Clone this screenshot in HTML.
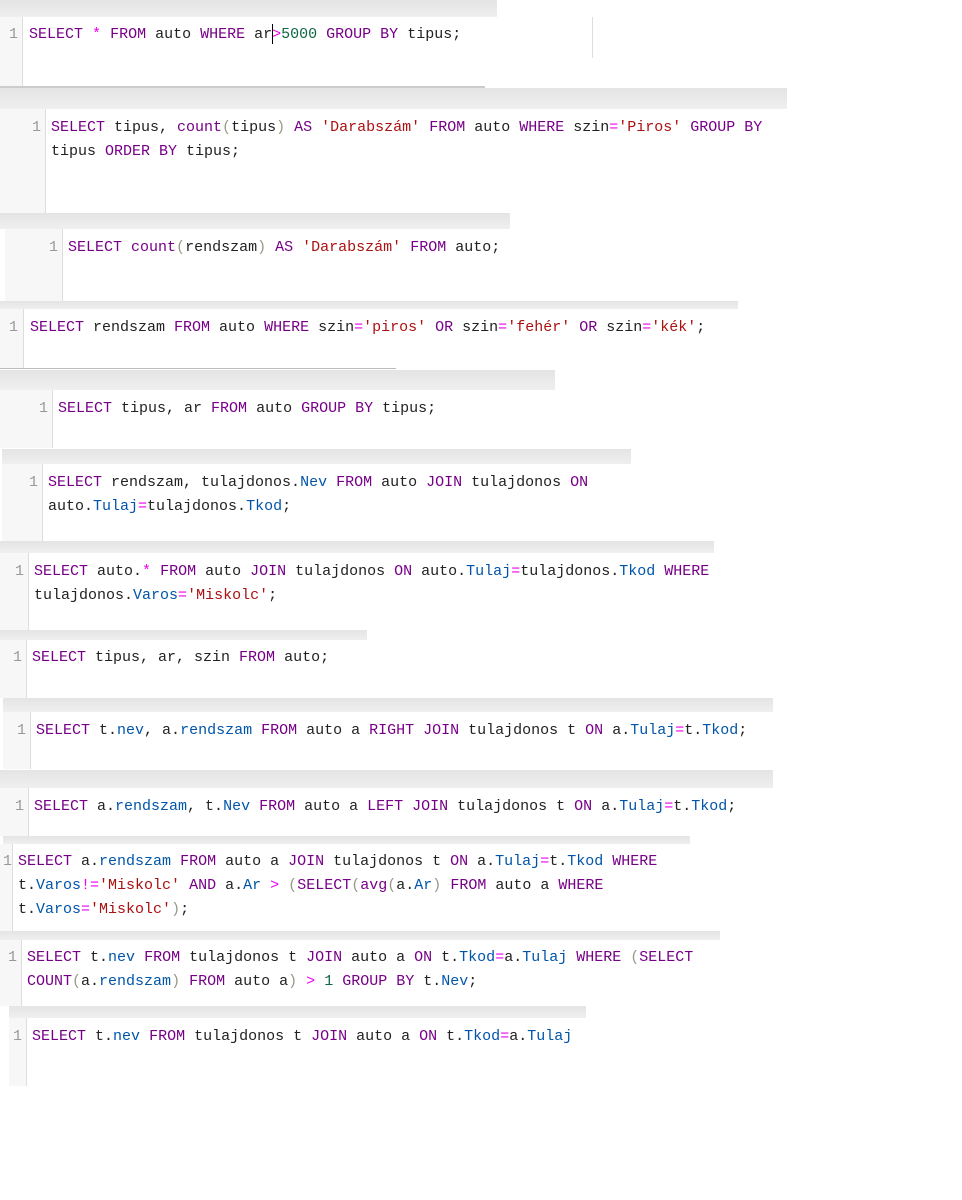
<!DOCTYPE html>
<html><head><meta charset="utf-8"><style>
body{margin:0;width:962px;height:1200px;background:#fff;position:relative;overflow:hidden;font-family:"Liberation Mono",monospace;font-size:15px;color:#222}
.b{position:absolute;background:linear-gradient(#e4e4e4,#efefef)}
.g{position:absolute;background:#f7f7f7;border-right:1px solid #ddd}
.t{position:absolute;line-height:24px;white-space:pre;margin-top:1px}
.n{position:absolute;line-height:24px;color:#999;margin-top:1px}
.k{color:#708}.s{color:#a11}.u{color:#164}.v{color:#05a}.o{color:#e0e}.p{color:#998}
</style></head><body>
<!-- 1 -->
<div class="b" style="left:0;top:0;width:497px;height:17px"></div>
<div class="g" style="left:0;top:17px;width:22px;height:70px"></div>
<div style="position:absolute;left:0;top:86px;width:485px;height:2px;background:#ccc"></div>
<div style="position:absolute;left:592px;top:17px;width:1px;height:41px;background:#ddd"></div>
<div class="n" style="left:9px;top:22px">1</div>
<div class="t" style="left:29px;top:22px"><span class="k">SELECT</span> <span class="o">*</span> <span class="k">FROM</span> auto <span class="k">WHERE</span> ar<span class="o">&gt;</span><span class="u">5000</span> <span class="k">GROUP BY</span> tipus;</div>
<div style="position:absolute;left:272px;top:24px;width:1px;height:20px;background:#000"></div>
<!-- 2 -->
<div class="b" style="left:0;top:88px;width:787px;height:21px"></div>
<div class="g" style="left:0;top:109px;width:45px;height:104px"></div>
<div class="n" style="left:32px;top:115px">1</div>
<div class="t" style="left:51px;top:115px"><span class="k">SELECT</span> tipus, <span class="k">count</span><span class="p">(</span>tipus<span class="p">)</span> <span class="k">AS</span> <span class="s">'Darabszám'</span> <span class="k">FROM</span> auto <span class="k">WHERE</span> szin<span class="o">=</span><span class="s">'Piros'</span> <span class="k">GROUP BY</span>
tipus <span class="k">ORDER BY</span> tipus;</div>
<!-- 3 -->
<div class="b" style="left:0;top:213px;width:510px;height:16px"></div>
<div class="g" style="left:5px;top:229px;width:57px;height:72px"></div>
<div class="n" style="left:49px;top:235px">1</div>
<div class="t" style="left:68px;top:235px"><span class="k">SELECT</span> <span class="k">count</span><span class="p">(</span>rendszam<span class="p">)</span> <span class="k">AS</span> <span class="s">'Darabszám'</span> <span class="k">FROM</span> auto;</div>
<!-- 4 -->
<div class="b" style="left:0;top:301px;width:738px;height:8px"></div>
<div class="g" style="left:0;top:309px;width:23px;height:59px"></div>
<div style="position:absolute;left:0;top:368px;width:396px;height:1px;background:#bbb"></div>
<div class="n" style="left:9px;top:315px">1</div>
<div class="t" style="left:30px;top:315px"><span class="k">SELECT</span> rendszam <span class="k">FROM</span> auto <span class="k">WHERE</span> szin<span class="o">=</span><span class="s">'piros'</span> <span class="k">OR</span> szin<span class="o">=</span><span class="s">'fehér'</span> <span class="k">OR</span> szin<span class="o">=</span><span class="s">'kék'</span>;</div>
<!-- 5 -->
<div class="b" style="left:0;top:370px;width:555px;height:20px"></div>
<div class="g" style="left:0;top:390px;width:52px;height:58px"></div>
<div class="n" style="left:39px;top:396px">1</div>
<div class="t" style="left:58px;top:396px"><span class="k">SELECT</span> tipus, ar <span class="k">FROM</span> auto <span class="k">GROUP BY</span> tipus;</div>
<!-- 6 -->
<div class="b" style="left:2px;top:449px;width:629px;height:15px"></div>
<div class="g" style="left:2px;top:464px;width:40px;height:77px"></div>
<div class="n" style="left:29px;top:470px">1</div>
<div class="t" style="left:48px;top:470px"><span class="k">SELECT</span> rendszam, tulajdonos.<span class="v">Nev</span> <span class="k">FROM</span> auto <span class="k">JOIN</span> tulajdonos <span class="k">ON</span>
auto.<span class="v">Tulaj</span><span class="o">=</span>tulajdonos.<span class="v">Tkod</span>;</div>
<!-- 7 -->
<div class="b" style="left:0;top:541px;width:714px;height:12px"></div>
<div class="g" style="left:0;top:553px;width:28px;height:77px"></div>
<div class="n" style="left:15px;top:559px">1</div>
<div class="t" style="left:34px;top:559px"><span class="k">SELECT</span> auto.<span class="o">*</span> <span class="k">FROM</span> auto <span class="k">JOIN</span> tulajdonos <span class="k">ON</span> auto.<span class="v">Tulaj</span><span class="o">=</span>tulajdonos.<span class="v">Tkod</span> <span class="k">WHERE</span>
tulajdonos.<span class="v">Varos</span><span class="o">=</span><span class="s">'Miskolc'</span>;</div>
<!-- 8 -->
<div class="b" style="left:0;top:630px;width:367px;height:10px"></div>
<div class="g" style="left:0;top:640px;width:26px;height:58px"></div>
<div class="n" style="left:13px;top:645px">1</div>
<div class="t" style="left:32px;top:645px"><span class="k">SELECT</span> tipus, ar, szin <span class="k">FROM</span> auto;</div>
<!-- 9 -->
<div class="b" style="left:3px;top:698px;width:770px;height:14px"></div>
<div class="g" style="left:3px;top:712px;width:27px;height:57px"></div>
<div class="n" style="left:17px;top:718px">1</div>
<div class="t" style="left:36px;top:718px"><span class="k">SELECT</span> t.<span class="v">nev</span>, a.<span class="v">rendszam</span> <span class="k">FROM</span> auto a <span class="k">RIGHT JOIN</span> tulajdonos t <span class="k">ON</span> a.<span class="v">Tulaj</span><span class="o">=</span>t.<span class="v">Tkod</span>;</div>
<!-- 10 -->
<div class="b" style="left:0;top:770px;width:773px;height:18px"></div>
<div class="g" style="left:0;top:788px;width:28px;height:48px"></div>
<div class="n" style="left:15px;top:794px">1</div>
<div class="t" style="left:34px;top:794px"><span class="k">SELECT</span> a.<span class="v">rendszam</span>, t.<span class="v">Nev</span> <span class="k">FROM</span> auto a <span class="k">LEFT JOIN</span> tulajdonos t <span class="k">ON</span> a.<span class="v">Tulaj</span><span class="o">=</span>t.<span class="v">Tkod</span>;</div>
<!-- 11 -->
<div class="b" style="left:3px;top:836px;width:687px;height:8px"></div>
<div class="g" style="left:0;top:844px;width:12px;height:87px"></div>
<div class="n" style="left:3px;top:849px">1</div>
<div class="t" style="left:18px;top:849px"><span class="k">SELECT</span> a.<span class="v">rendszam</span> <span class="k">FROM</span> auto a <span class="k">JOIN</span> tulajdonos t <span class="k">ON</span> a.<span class="v">Tulaj</span><span class="o">=</span>t.<span class="v">Tkod</span> <span class="k">WHERE</span>
t.<span class="v">Varos</span><span class="o">!=</span><span class="s">'Miskolc'</span> <span class="k">AND</span> a.<span class="v">Ar</span> <span class="o">&gt;</span> <span class="p">(</span><span class="k">SELECT</span><span class="p">(</span><span class="k">avg</span><span class="p">(</span>a.<span class="v">Ar</span><span class="p">)</span> <span class="k">FROM</span> auto a <span class="k">WHERE</span>
t.<span class="v">Varos</span><span class="o">=</span><span class="s">'Miskolc'</span><span class="p">)</span>;</div>
<!-- 12 -->
<div class="b" style="left:0;top:931px;width:720px;height:9px"></div>
<div class="g" style="left:0;top:940px;width:21px;height:66px"></div>
<div class="n" style="left:8px;top:945px">1</div>
<div class="t" style="left:27px;top:945px"><span class="k">SELECT</span> t.<span class="v">nev</span> <span class="k">FROM</span> tulajdonos t <span class="k">JOIN</span> auto a <span class="k">ON</span> t.<span class="v">Tkod</span><span class="o">=</span>a.<span class="v">Tulaj</span> <span class="k">WHERE</span> <span class="p">(</span><span class="k">SELECT</span>
<span class="k">COUNT</span><span class="p">(</span>a.<span class="v">rendszam</span><span class="p">)</span> <span class="k">FROM</span> auto a<span class="p">)</span> <span class="o">&gt;</span> <span class="u">1</span> <span class="k">GROUP BY</span> t.<span class="v">Nev</span>;</div>
<!-- 13 -->
<div class="b" style="left:9px;top:1006px;width:577px;height:12px"></div>
<div class="g" style="left:9px;top:1018px;width:17px;height:68px"></div>
<div class="n" style="left:13px;top:1024px">1</div>
<div class="t" style="left:32px;top:1024px"><span class="k">SELECT</span> t.<span class="v">nev</span> <span class="k">FROM</span> tulajdonos t <span class="k">JOIN</span> auto a <span class="k">ON</span> t.<span class="v">Tkod</span><span class="o">=</span>a.<span class="v">Tulaj</span></div>
</body></html>
